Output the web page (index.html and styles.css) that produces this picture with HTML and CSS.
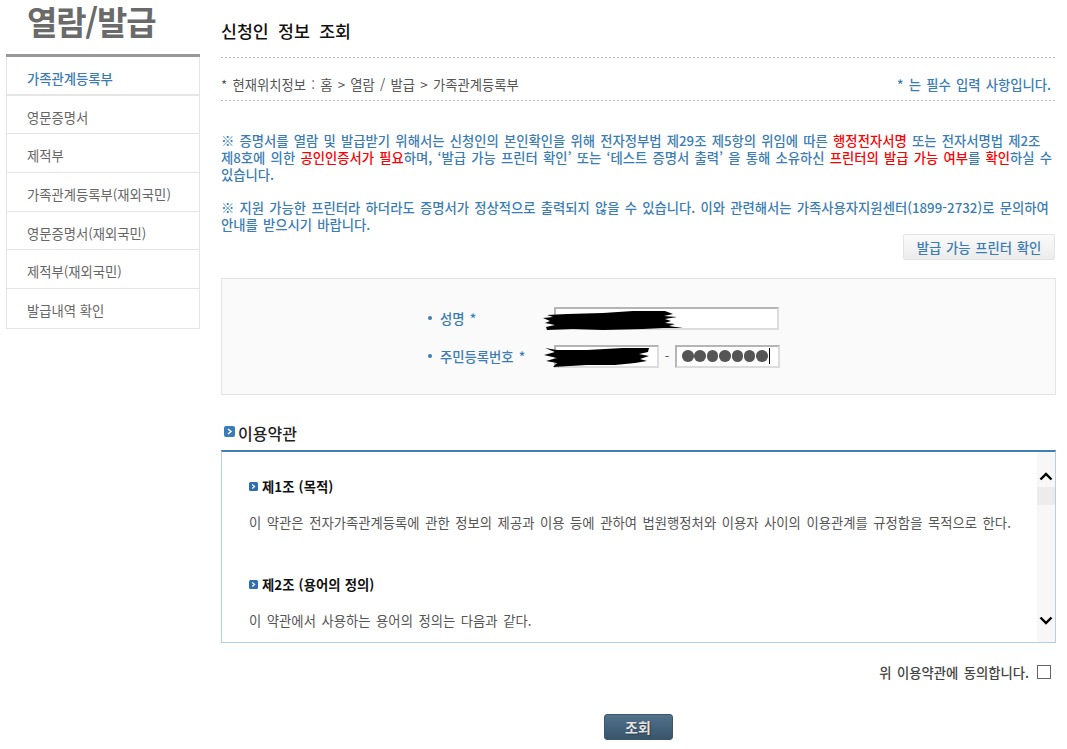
FILE: index.html
```html
<!DOCTYPE html>
<html lang="ko">
<head>
<meta charset="utf-8">
<title>신청인 정보 조회</title>
<link rel="stylesheet" href="styles.css">
</head>
<body>
<div class="app">
  <aside class="side">
    <h2 class="side-title">열람/발급</h2>
    <ul class="menu">
      <li class="active">가족관계등록부</li>
      <li>영문증명서</li>
      <li>제적부</li>
      <li>가족관계등록부(재외국민)</li>
      <li>영문증명서(재외국민)</li>
      <li>제적부(재외국민)</li>
      <li>발급내역 확인</li>
    </ul>
  </aside>
  <main class="main">
    <h1 class="page-title">신청인 정보 조회</h1>
    <div class="crumbs">
      <span>* 현재위치정보 : 홈 &gt; 열람 / 발급 &gt; 가족관계등록부</span>
      <span class="req">* 는 필수 입력 사항입니다.</span>
    </div>
    <div class="notice">
      <p>※ 증명서를 열람 및 발급받기 위해서는 신청인의 본인확인을 위해 전자정부법 제29조 제5항의 위임에 따른 <em>행정전자서명</em> 또는 전자서명법 제2조 제8호에 의한 <em>공인인증서가 필요</em>하며, ‘발급 가능 프린터 확인’ 또는 ‘테스트 증명서 출력’ 을 통해 소유하신 <em>프린터의 발급 가능 여부</em>를 <em>확인</em>하실 수 있습니다.</p>
      <p>※ 지원 가능한 프린터라 하더라도 증명서가 정상적으로 출력되지 않을 수 있습니다. 이와 관련해서는 가족사용자지원센터(1899-2732)로 문의하여 안내를 받으시기 바랍니다.</p>
    </div>
    <div class="printer-row"><button class="printer-btn" type="button">발급 가능 프린터 확인</button></div>
    <section class="form-box">
      <div class="form-row">
        <label class="label">성명 *</label>
        <div class="field">
          <span class="input input-name"></span>
          <svg class="scribble scribble-name" viewBox="0 0 140 19" preserveAspectRatio="none"><path d="M4 4 L24 3 L60 2 L90 0 L122 0 L130 3 L121 5 L134 6 L122 8 L128 10 L122 12 L132 13 L126 15 L140 17 L120 17 L100 18 L60 19 L30 18 L4 19 L3 16 L12 14 L2 12 L7 10 L0 7 L10 6 Z" fill="#000"/></svg>
        </div>
      </div>
      <div class="form-row">
        <label class="label">주민등록번호 *</label>
        <div class="field">
          <span class="input input-front"></span>
          <svg class="scribble scribble-id" viewBox="0 0 107 20" preserveAspectRatio="none"><path d="M2 1 L14 3 L44 3 L80 1 L106 1 L105 5 L96 7 L106 9 L97 12 L104 14 L92 16 L72 18 L44 18 L10 20 L14 16 L3 14 L14 11 L1 8 L12 5 Z" fill="#000"/></svg>
          <span class="dash">-</span>
          <span class="input input-back"><i></i><i></i><i></i><i></i><i></i><i></i><i></i><b class="caret"></b></span>
        </div>
      </div>
    </section>
    <h3 class="terms-title"><svg class="bullet bullet-lg" viewBox="0 0 11 11"><rect width="11" height="11" rx="2" fill="#3a7cb5"/><path d="M4 3 L7 5.5 L4 8" fill="none" stroke="#fff" stroke-width="1.4"/></svg>이용약관</h3>
    <section class="terms">
      <div class="terms-body">
        <h4 class="art-title"><svg class="bullet" viewBox="0 0 9 9"><rect width="9" height="9" rx="1.5" fill="#2f6fb0"/><path d="M3.2 2.5 L5.6 4.5 L3.2 6.5" fill="none" stroke="#fff" stroke-width="1.2"/></svg>제1조 (목적)</h4>
        <p class="art-text">이 약관은 전자가족관계등록에 관한 정보의 제공과 이용 등에 관하여 법원행정처와 이용자 사이의 이용관계를 규정함을 목적으로 한다.</p>
        <h4 class="art-title art-next"><svg class="bullet" viewBox="0 0 9 9"><rect width="9" height="9" rx="1.5" fill="#2f6fb0"/><path d="M3.2 2.5 L5.6 4.5 L3.2 6.5" fill="none" stroke="#fff" stroke-width="1.2"/></svg>제2조 (용어의 정의)</h4>
        <p class="art-text">이 약관에서 사용하는 용어의 정의는 다음과 같다.</p>
      </div>
      <div class="scrollbar">
        <svg class="arrow" viewBox="0 0 14 9"><path d="M1.5 7.5 L7 2 L12.5 7.5" fill="none" stroke="#000" stroke-width="2.4"/></svg>
        <div class="thumb"></div>
        <div class="track"></div>
        <svg class="arrow" viewBox="0 0 14 9"><path d="M1.5 1.5 L7 7 L12.5 1.5" fill="none" stroke="#000" stroke-width="2.4"/></svg>
      </div>
    </section>
    <div class="agree"><span>위 이용약관에 동의합니다.</span><span class="check"></span></div>
    <div class="submit-row"><button class="submit" type="button">조회</button></div>
  </main>
</div>
</body>
</html>
```
FILE: styles.css
```css
* { box-sizing: border-box; }
html, body { margin: 0; padding: 0; background: #fff; }
body { font-family: "Noto Sans CJK KR", "Noto Sans", sans-serif; font-size: 13.33px; color: #555; height: 749px; overflow: hidden; }
.app { display: flex; align-items: flex-start; padding-left: 6px; }
.side { width: 194px; flex: none; }
.side-title { margin: 0; height: 57px; padding: 0 0 0 21px; border-bottom: 3px solid #999; font-size: 33px; line-height: 43px; font-weight: 700; color: #6a6a6a; letter-spacing: -1.2px; }
.menu { list-style: none; margin: 0; padding: 0; border: 1px solid #e5e5e5; border-top-width: 0; }
.menu li { height: 38.7px; line-height: 44px; padding-left: 20px; border-bottom: 1px solid #e5e5e5; color: #666; white-space: nowrap; }
.menu li:last-child { border-bottom: 0; }
.menu .active { color: #3a7db5; font-weight: 500; border-bottom-width: 2px; }
.main { width: 835px; margin-left: 21px; flex: none; }
.page-title, .crumbs { background: repeating-linear-gradient(90deg, #bbb 0 2px, transparent 2px 4px) left bottom / 834px 1px no-repeat; }
.page-title { margin: 0; height: 58px; padding-top: 18px; font-size: 17.3px; line-height: 26px; font-weight: 500; color: #111; word-spacing: 4.5px; }
.crumbs { display: flex; justify-content: space-between; height: 43px; padding: 15px 5px 0 0; line-height: 24px; color: #555; word-spacing: 1.5px; }
.req { color: #3a7db5; font-weight: 500; }
.notice { padding-top: 31px; color: #3a7db5; font-weight: 500; line-height: 17px; word-spacing: 1.5px; }
.notice p { margin: 0 0 16px; }
.notice p:last-child { margin-bottom: 0; }
.notice em { font-style: normal; color: #f00; }
.printer-row { display: flex; justify-content: flex-end; margin-top: 1px; padding-right: 1px; }
.printer-btn { width: 152px; height: 26px; padding: 0; border: 1px solid #e3e3e3; border-radius: 2px; background: linear-gradient(#fafafa, #ececec); color: #3a7db5; font: 500 13.33px "Noto Sans CJK KR", sans-serif; word-spacing: 1px; }
.form-box { height: 117px; margin-top: 18px; padding: 20px 0 0 206px; background: #fafafa; border: 1px solid #e5e5e5; }
.form-row { display: flex; align-items: center; height: 38px; }
.label { width: 126px; padding-left: 12px; color: #3a7db5; font-weight: 500; position: relative; word-spacing: 1.5px; }
.label::before { content: ""; position: absolute; left: 0; top: 50%; width: 4px; height: 4px; margin-top: -2px; border-radius: 50%; background: #3a7db5; }
.field { position: relative; display: flex; align-items: center; }
.input { display: block; background: #fff; border: 2px solid #dcdcdc; border-top-color: #b5b5b5; border-left-color: #b5b5b5; height: 23px; }
.input-name { width: 225px; }
.input-front { width: 105px; }
.input-back { width: 105px; display: flex; align-items: center; padding-left: 5px; gap: 0.9px; }
.input-back i { width: 11.5px; height: 11.5px; border-radius: 50%; background: #555; flex: none; }
.caret { width: 1px; height: 16px; background: #000; flex: none; }
.dash { width: 16px; text-align: center; color: #555; }
.scribble { position: absolute; left: -11px; }
.scribble-name { top: 4px; width: 140px; height: 19px; }
.scribble-id { top: 2px; width: 107px; height: 20px; }
.terms-title { display: flex; align-items: center; gap: 3px; margin: 22px 0 0 3px; height: 33px; padding-bottom: 2px; font-size: 16px; font-weight: 500; color: #222; }
.bullet { width: 9px; height: 9px; flex: none; margin-right: 4px; }
.bullet-lg { width: 11px; height: 11px; margin: -2px 0 0; }
.terms { display: flex; height: 193px; border: 1px solid #b5d0e6; border-top: 2px solid #3f7fb5; }
.terms-body { flex: 1; padding: 24px 0 0 27px; min-width: 0; }
.art-title { display: flex; align-items: center; margin: 0; height: 20px; font-size: 13.33px; font-weight: 700; color: #111; word-spacing: 0.5px; white-space: pre; }
.art-next { margin-top: 41px; }
.art-text { margin: 17px 0 0; line-height: 20px; color: #555; word-spacing: 1.85px; }
.scrollbar { width: 18px; flex: none; display: flex; flex-direction: column; background: #f7f7f7; }
.arrow { width: 14px; height: 9px; margin: 20px 2px 6px; flex: none; }
.thumb { height: 18px; background: #ececec; flex: none; }
.track { flex: 1; }
.scrollbar .arrow:last-child { margin: 0 2px 17px; }
.agree { display: flex; justify-content: flex-end; align-items: center; gap: 8px; height: 28px; margin-top: 15px; padding-right: 5px; font-weight: 500; color: #444; word-spacing: 1.7px; }
.check { width: 14px; height: 14px; border: 1px solid #666; background: #fff; }
.submit-row { display: flex; justify-content: center; margin-top: 28px; padding-right: 1px; }
.submit { width: 69px; height: 26px; border: 1px solid #3d566b; border-radius: 3px; background: linear-gradient(#52718a, #38556c); color: #e4e4e4; font: 700 14px "Noto Sans CJK KR", sans-serif; padding: 0; text-shadow: 1px 1px 1px #2a3d4d; }
```
